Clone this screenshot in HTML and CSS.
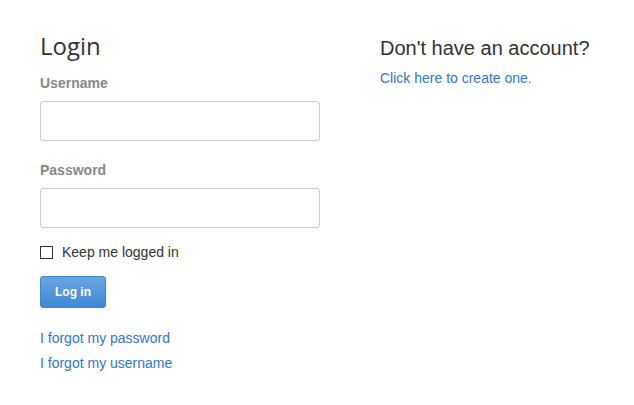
FILE: index.html
```html
<!DOCTYPE html>
<html>
<head>
<meta charset="utf-8">
<link rel="stylesheet" href="styles.css">
</head>
<body>
<div class="page">
  <div class="login">
    <h1 class="title">Login</h1>
    <label class="field-label" for="u">Username</label>
    <input class="field" id="u" type="text">
    <label class="field-label second" for="p">Password</label>
    <input class="field" id="p" type="password">
    <label class="remember"><span class="box"></span>Keep me logged in</label>
    <button class="btn">Log in</button>
    <div class="links">
      <a href="#" class="link">I forgot my password</a>
      <a href="#" class="link">I forgot my username</a>
    </div>
  </div>
  <div class="signup">
    <h2 class="subtitle">Don't have an account?</h2>
    <a href="#" class="link">Click here to create one.</a>
  </div>
</div>
</body>
</html>
```
FILE: styles.css
```css
html, body {
  margin: 0;
  background: #fff;
}
body {
  font-family: "Liberation Sans", Arial, sans-serif;
  font-size: 14px;
  line-height: 20px;
  color: #333;
}
.page {
  display: flex;
  gap: 60px;
  padding: 30px 40px 0;
}
.login {
  width: 280px;
  display: flex;
  flex-direction: column;
  align-items: flex-start;
}
.title {
  margin: 0;
  font-family: "Open Sans", sans-serif;
  font-weight: 400;
  font-size: 24px;
  line-height: 32px;
  color: #333;
}
.field-label {
  display: block;
  margin-top: 11px;
  font-weight: bold;
  color: #888;
}
.field-label.second {
  margin-top: 19px;
}
.field {
  box-sizing: border-box;
  width: 280px;
  height: 40px;
  margin: 8px 0 0;
  border: 1px solid #ccc;
  border-radius: 3px;
  background: #fff;
  padding: 0 8px;
}
.remember {
  display: flex;
  align-items: center;
  margin-top: 14px;
  color: #333;
}
.box {
  box-sizing: border-box;
  width: 13px;
  height: 13px;
  border: 1px solid #333;
  margin-right: 9px;
  margin-top: 1px;
  background: #fff;
}
.btn {
  margin-top: 14px;
  box-sizing: border-box;
  width: 66px;
  height: 32px;
  padding: 0;
  border: 1px solid #3d86d2;
  border-radius: 3px;
  background: linear-gradient(#6aa6e2, #3e88d5);
  color: #fff;
  font-family: "Liberation Sans", Arial, sans-serif;
  font-size: 12px;
  font-weight: bold;
}
.links {
  margin-top: 20px;
  display: flex;
  flex-direction: column;
  gap: 5px;
}
.link {
  color: #3377c9;
  text-decoration: none;
}
.signup {
  display: flex;
  flex-direction: column;
  align-items: flex-start;
}
.subtitle {
  margin: 6px 0 8px;
  font-weight: 400;
  font-size: 20px;
  line-height: 24px;
  color: #333;
}
```
